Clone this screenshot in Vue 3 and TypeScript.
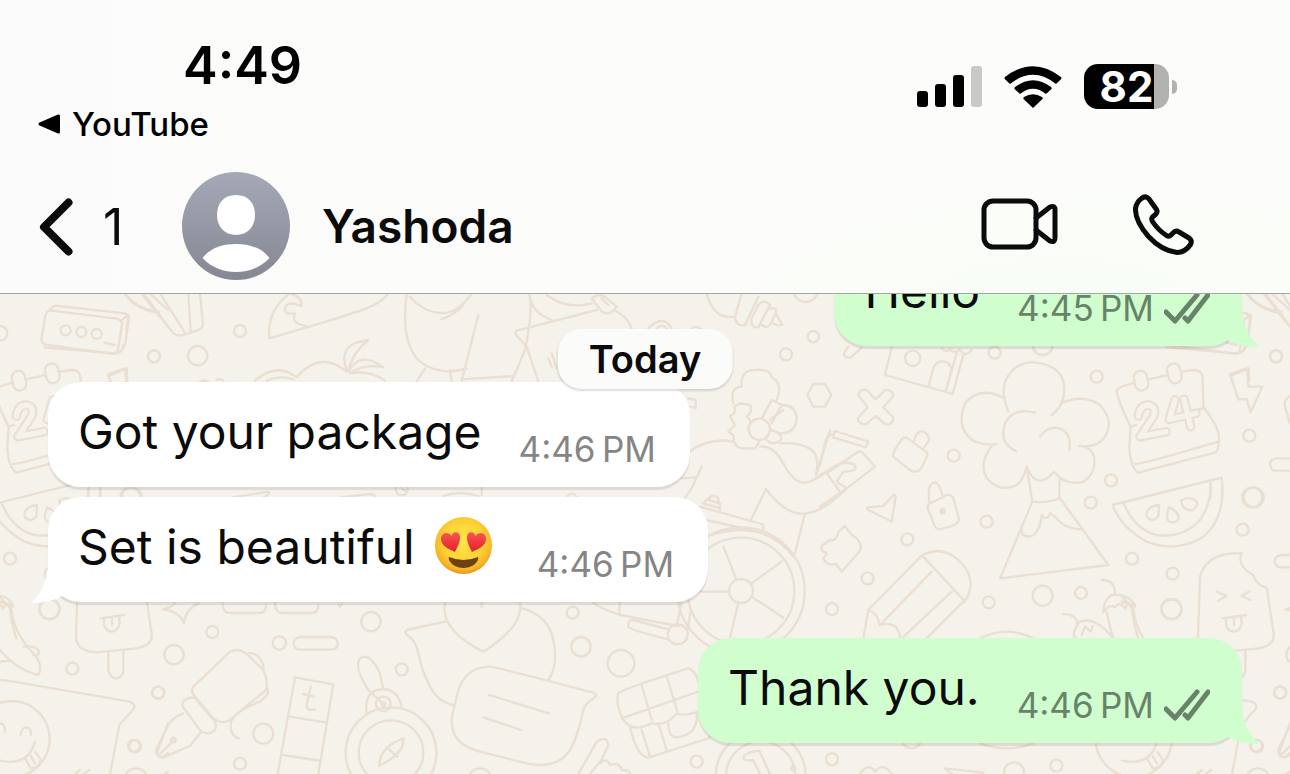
<script setup lang="ts">
interface Message {
  id: number
  text: string
  time: string
  outgoing: boolean
  tail: boolean
  emoji?: boolean
  newGroup?: boolean
}

const messages: Message[] = [
  { id: 1, text: 'Hello', time: '4:45\u202FPM', outgoing: true, tail: true },
  { id: 2, text: 'Got your package', time: '4:46\u202FPM', outgoing: false, tail: false, newGroup: true },
  { id: 3, text: 'Set is beautiful', time: '4:46\u202FPM', outgoing: false, tail: true, emoji: true },
  { id: 4, text: 'Thank you.', time: '4:46\u202FPM', outgoing: true, tail: true, newGroup: true },
]

interface DoodleGroup {
  x: number
  y: number
  dots: [number, number, number][]
  lines: string
}

// Wallpaper doodles, grouped by region; the whole set repeats every 3366 units.
const doodles: DoodleGroup[] = [
  {
    x: 0,
    y: -12,
    dots: [[197, 121, 15], [244, 126, 15], [290, 132, 15], [720, 123, 18], [462, 199, 18], [593, 197, 29], [0, 130, 22], [395, 622, 30], [1205, 598, 18]],
    lines:
      'M155 62L350 86Q368 90 366 104L354 178Q350 194 335 191L140 165Q122 162 125 145L136 78Q138 62 155 62Z' +
      'M140 68L160 50Q165 46 175 48L375 70Q388 74 386 88L376 160Q372 184 345 190M364 92L382 76' +
      'M375 10Q400 55 470 68M430 10L520 130Q535 142 560 132L595 120Q612 112 608 95L600 10M480 10L555 128M565 10L572 128' +
      'M870 10Q800 60 808 145Q1000 90 1100 55Q1150 35 1165 10M875 12Q905 20 905 48Q860 30 855 55Q850 75 885 70Q870 100 920 108' +
      'M765 272Q830 215 890 262Q960 180 1040 245M1040 240Q1010 160 1105 150Q1055 190 1045 245Q1080 180 1150 232Q1090 220 1050 250Q1110 240 1155 272' +
      'M800 272Q840 255 880 268M325 258L380 235L382 272M325 258L332 275' +
      'M600 275Q610 268 625 275M650 270Q660 264 670 272' +
      'M265 590V625M300 590V620M700 622L805 605Q812 612 790 622M1020 622L1110 612Q1125 612 1125 622',
  },
  {
    x: 1200,
    y: -12,
    dots: [[1217, 0, 36], [1240, 140, 17], [1158, 193, 18], [1078, 418, 32], [1023, 903, 191], [1023, 903, 160], [1023, 903, 36], [515, 625, 14]],
    lines:
      'M20 10Q0 160 60 215Q120 260 200 235M30 20Q80 75 140 68Q180 62 215 10M125 88Q170 70 190 45M235 75L185 272M75 235L50 275M150 240L155 275M185 268L340 258L335 275' +
      'M388 10Q400 60 375 180L335 275M390 25Q400 70 455 90M440 15Q500 60 575 40M590 60L350 122Q340 130 355 142L380 170L415 275M640 60Q680 75 695 115' +
      'M575 25Q600 5 620 25L650 50Q630 80 605 65ZM605 25L625 45M445 205L455 230M455 190L470 235' +
      'M745 115Q790 70 815 115M770 115Q785 100 800 115M875 115Q890 105 905 118' +
      'M920 10Q940 90 1005 80Q1005 108 1035 106L1075 20M1005 80L1025 10M1055 85Q1050 115 1075 112L1110 45Q1090 25 1075 45ZM1085 105Q1105 120 1115 95L1130 60Q1120 50 1108 58M1115 98Q1130 110 1147 104L1128 72' +
      'M1000 340Q990 290 1025 290Q1020 240 1065 240Q1110 235 1115 262Q1150 280 1130 330M1003 350L1020 340L1050 345Q1060 365 1040 380Q1060 395 1045 412M1003 350Q1010 370 990 378L1005 405L985 425L1000 435Q1000 475 1030 475L1065 475L1078 455' +
      'M1085 385L1115 330L1145 345L1115 400M1145 345Q1190 345 1190 390Q1185 430 1140 430L1112 420Q1150 430 1142 450Q1120 470 1100 450M1110 390L1150 360' +
      'M860 490Q930 440 1000 455M1080 470Q1120 465 1150 520Q1190 600 1240 570L1275 550M1140 460Q1200 455 1235 480Q1260 500 1248 555L1290 420M905 530L875 595L850 630M845 565L885 562' +
      'M1098 597L1050 695M1098 597Q1160 680 1220 670Q1270 665 1340 595M1215 670L1185 790' +
      'M900 650L1085 702Q1100 715 1080 727L920 690M908 640L960 655M913 638L920 628L960 640L960 658M925 628Q930 615 945 618Q958 622 955 638M915 740Q1090 680 1180 800' +
      'M1010 870L970 770M1052 882L1145 815M988 905H870M1055 920L1150 983M1015 938L990 1043' +
      'M1222 315L1240 282H1275L1294 315L1275 350H1240ZM865 325L887 330V355L870 350M5 595Q25 605 15 615M245 592V615M130 618Q180 600 235 618',
  },
  {
    x: 2460,
    y: -12,
    dots: [
      [278, 205, 23], [524, 188, 18], [668, 165, 30], [830, 260, 18], [1368, 199, 18], [1288, 437, 18], [401, 497, 18], [873, 571, 18], [812, 638, 18], [500, 695, 18],
      [262, 748, 18], [143, 865, 18], [36, 957, 18], [506, 937, 18], [668, 917, 30], [783, 909, 18], [1055, 958, 30], [1058, 851, 18], [936, 806, 18], [1268, 719, 18], [1297, 622, 30],
      [368, 663, 7], [368, 663, 3],
    ],
    lines:
      'M125 172L95 200Q80 208 72 195Q70 188 85 170' +
      'M215 172L195 255L398 312L430 195M378 300L410 190M325 290L340 235Q350 210 375 215Q400 225 392 250L378 300M365 175Q375 190 390 178Q405 195 420 178Q435 205 455 180' +
      'M115 315Q120 295 140 300L167 328L195 300Q215 297 220 318L190 352L220 382Q218 408 195 402L167 378L140 402Q115 405 113 385L143 352Z' +
      'M45 423L145 455L138 472L38 442ZM38 432Q20 435 15 460L0 525M20 550L110 488Q122 480 130 490L165 530L80 595L50 575M20 550L60 605M0 555L20 545Q70 505 105 525Q115 545 70 545L50 575M0 650L80 595' +
      'M260 443L322 488Q325 500 300 540Q285 550 270 540L220 500Q215 490 245 448Q252 440 260 443ZM283 450Q290 420 310 425Q330 435 325 455L308 478' +
      'M335 638L380 615Q395 612 400 625L417 685Q418 700 395 708L360 718Q347 718 343 705L323 655Q322 642 335 638ZM328 635Q320 580 345 577Q360 580 367 615' +
      'M142 652Q140 660 150 662L215 695L227 618Q224 612 218 618L190 648Z' +
      'M8 765L30 750Q50 755 55 725L75 708L95 735Q125 750 122 780L65 845L48 822Q20 830 10 805Q30 785 8 785Q0 775 8 765Z' +
      'M565 365Q540 300 560 265Q590 215 640 217Q740 225 732 310Q728 350 695 375M722 340Q790 310 840 345Q880 390 860 430Q840 475 778 468M552 325Q480 285 435 340Q405 420 465 455Q500 468 530 462M588 483Q535 460 555 400Q580 350 645 368M660 440Q690 400 730 420Q755 440 748 480' +
      'M515 468Q475 520 500 565Q540 610 590 585Q610 570 620 530Q650 605 702 545Q740 590 790 575Q830 550 822 500Q815 475 790 470' +
      'M620 530L637 635M718 570V625M637 635Q680 640 720 625M637 635L540 865L865 825L720 625M605 715Q600 740 630 740Q660 730 665 675Q680 695 690 670L705 680Q730 715 780 718' +
      'M945 278Q895 290 890 302Q892 330 932 410L928 470Q930 530 955 548L1185 488Q1200 480 1196 430Q1185 395 1150 350L1148 262Q1145 240 1120 240L1087 245M985 268L1043 255M945 522Q955 526 1195 455M932 410L948 405M1125 360L1150 355' +
      'M1230 252L1282 235L1285 290L1327 290L1292 367L1280 327L1255 328ZM1410 505H1370Q1350 508 1350 523Q1352 542 1370 542H1410M1410 795H1385Q1364 798 1364 813Q1366 832 1385 832H1410M1410 318Q1390 330 1395 350L1410 400' +
      'M878 645L1205 563Q1220 680 1150 740Q1070 790 980 755Q900 710 878 645ZM910 638Q945 720 1010 735Q1090 745 1140 690Q1175 640 1172 575' +
      'M1017 645Q975 650 980 680Q995 700 1015 680ZM1048 652Q1035 680 1045 692Q1065 705 1077 685Q1075 665 1048 652ZM1083 632Q1090 665 1120 660Q1140 640 1125 630Q1105 618 1083 632Z' +
      'M1340 893Q1308 885 1300 855Q1250 830 1265 790Q1160 785 1140 860L1134 1040Q1136 1085 1196 1087L1316 1075Q1366 1065 1361 1030ZM1231 1087V1140Q1236 1165 1256 1165Q1276 1160 1276 1140V1083' +
      'M1190 905L1220 918L1195 932M1290 903L1265 918L1292 930M1208 985L1278 975M1218 985V1005Q1225 1025 1243 1025Q1262 1020 1265 1000L1263 980M1242 985V1005' +
      'M305 797L145 960L130 1045M305 797Q370 760 425 820Q470 870 440 925L320 1045M310 800L435 935M335 845L180 1005M395 905L245 1045M145 960Q175 970 178 1005Q235 990 240 1045' +
      'M730 972Q765 970 775 1000Q750 1040 770 1045M770 1000Q820 970 880 1045M785 1035L795 1010L812 1025L818 1008M845 870Q885 870 885 910M850 965Q855 905 900 915Q930 920 945 945L925 940L915 955Q900 930 885 952Q870 940 850 965M860 965L870 1010L880 1045M935 950Q940 1000 955 1045M480 1045Q560 1005 640 1045' +
      'M1280 10Q1320 60 1385 65M1330 10L1410 110M1355 10L1410 60M1275 70L1292 75L1285 120M1040 172L1250 190Q1275 190 1275 165M1220 158L1250 165',
  },
  {
    x: 0,
    y: 888,
    dots: [
      [148, 57, 30], [637, 126, 18], [522, 194, 29], [217, 236, 18], [475, 308, 18], [405, 469, 18], [790, 431, 30], [720, 521, 18], [838, 159, 20], [1113, 95, 29], [1205, 238, 18], [408, 570, 35],
      [35, 447, 114], [520, 450, 7], [1173, 488, 97], [1173, 488, 136], [1150, 342, 22], [1150, 342, 5],
    ],
    lines:
      'M0 180Q50 240 115 255Q130 230 105 195Q40 130 35 60L0 20M0 35L40 50M70 170Q110 165 118 185Q115 200 100 195M0 215L30 212' +
      'M-30 272Q10 268 40 275L390 335Q410 345 400 358L358 405L330 552M0 400Q15 400 15 425M62 435Q65 412 80 412Q95 415 93 435M0 512Q85 530 105 455M75 505L92 535Q120 535 122 508L105 485M92 498L105 520M225 552L240 540M250 552L268 540' +
      'M490 58Q540 65 552 100Q555 60 595 40M490 58Q520 50 525 40M668 38Q668 68 688 69H780Q798 68 798 45M825 38Q825 68 845 69H937Q955 68 955 45M1015 45L1020 50L1025 42' +
      'M900 141H994Q1013 144 1013 160Q1013 178 994 179H900Q881 178 881 160Q881 144 900 141Z' +
      'M580 290L690 185Q715 172 740 192L790 240Q805 270 798 300L690 390Q665 405 640 385L585 320Q570 305 580 290ZM740 192Q770 180 790 225V240M800 290Q815 310 780 335Q700 365 692 400Q690 440 717 445' +
      'M550 335Q565 318 585 325L645 395Q655 425 625 430Q610 430 600 420L548 350Q546 340 550 335ZM550 370Q510 385 500 415L468 480Q470 505 490 502L570 468L603 425M480 492L520 452' +
      'M833 552L885 262L1000 283L955 552M868 380L978 397M850 495L962 513M932 290L920 345Q920 365 945 358M910 312L942 320' +
      'M1100 370Q1090 300 1150 297Q1195 300 1205 352M1105 300Q1060 230 1080 205Q1110 185 1140 250L1150 297M1105 300L1150 342M1210 445Q1215 490 1137 528Q1140 470 1210 445ZM1160 472L1192 500',
  },
  {
    x: 1200,
    y: 888,
    dots: [[518, 68, 18], [543, 170, 29], [663, 220, 40], [890, 515, 18], [240, 570, 35], [833, 133, 30], [1082, 558, 135], [1082, 558, 104], [1180, 535, 6]],
    lines:
      'M135 95L20 120Q12 128 22 135Q50 155 55 190Q65 240 85 280Q110 335 158 345M135 40Q120 120 250 185Q370 110 360 40M245 38V50M365 55Q430 70 455 130Q480 220 445 270' +
      'M270 230Q285 230 580 308Q595 314 585 322Q555 340 550 360Q530 450 510 480Q470 540 380 520L240 485Q140 460 158 370L175 300Q200 230 270 230ZM268 315L447 370M250 382L363 420' +
      'M655 310Q660 300 865 235Q885 240 895 275M655 310Q645 340 670 390Q700 430 755 400Q800 410 830 370Q850 380 895 365M725 285L755 390M800 258L832 365M665 385L895 305M690 410Q710 500 745 503L910 450Q925 448 930 440M725 420L750 500M775 400L800 480M805 400Q805 450 840 440Q895 430 890 370' +
      'M535 552L590 455Q620 435 625 465L600 520Q620 500 630 525Q660 515 665 540Q690 540 690 552M570 552L600 515' +
      'M580 38Q610 60 660 75L835 108M660 38L657 75M845 40L830 105M805 118L700 90Q682 90 685 110Q688 120 805 148M870 70L862 130' +
      'M1078 482Q1045 485 1030 500Q1030 515 1060 510L1080 552M1078 482L1110 552',
  },
  {
    x: 2460,
    y: 888,
    dots: [[36, 508, 18], [709, 527, 18], [582, 547, 30], [1380, 308, 18], [1308, 467, 18], [275, 445, 30]],
    lines: 'M120 552Q145 515 165 545Q190 515 215 552M395 552L375 535L490 548M480 460Q560 490 640 460M1410 400L1380 480Q1375 505 1395 500L1410 490M1400 552L1410 545',
  },
]
</script>

<template>
  <div class="screen">
    <header class="top">
      <div class="status">
        <div class="status-left">
          <time class="clock">4:49</time>
          <a class="return" href="#">
            <svg class="return-icon" viewBox="0 0 22 22" aria-hidden="true"><path d="M20 1.500Q22 1 22 3V19Q22 21 20 20.500L1.500 12.500Q-.5 11 1.500 9.500Z" /></svg>
            <span>YouTube</span>
          </a>
        </div>
        <div class="status-right">
          <svg class="signal" viewBox="0 0 65 41" aria-label="Signal" role="img">
            <rect x="0" y="25" width="11" height="16" rx="3" />
            <rect x="18" y="18" width="11" height="23" rx="3" />
            <rect x="36" y="9" width="11" height="32" rx="3" />
            <rect x="54" y="0" width="11" height="41" rx="3" fill="#c9c9c8" />
          </svg>
          <svg class="wifi" viewBox="0 0 58 42" aria-label="Wi-Fi" role="img">
            <path d="M29 42L19.500 33Q18.800 32 20 31Q29 25.500 38 31Q39.200 32 38.500 33Z" />
            <path d="M10.500 23L16 28Q29 17.500 42 28L47.500 23Q48 22 47 21Q29 7.500 11 21Q10 22 10.500 23Z" />
            <path d="M.8 13L6 18Q29 -.5 52 18L57.200 13Q57.800 12 57 11Q29-10.500 1 11Q.2 12 .8 13Z" />
          </svg>
          <div class="battery">
            <span class="battery-body">82</span>
            <span class="battery-cap"></span>
          </div>
        </div>
      </div>

      <nav class="nav">
        <button class="back" type="button" aria-label="Back">
          <svg class="chevron" viewBox="0 0 34 58" aria-hidden="true"><path d="M29.500 4.500L5 29L29.500 53.500" /></svg>
          <span>1</span>
        </button>
        <svg class="avatar" viewBox="0 0 108 108" aria-hidden="true">
          <defs>
            <linearGradient id="avatar-fill" x1="0" y1="0" x2="0" y2="1">
              <stop offset="0" stop-color="#a5a9b7" />
              <stop offset="1" stop-color="#858892" />
            </linearGradient>
          </defs>
          <circle cx="54" cy="54" r="54" fill="url(#avatar-fill)" />
          <path d="M54 23C67 23 73 32 73 43S66 63 54 63S35 54 35 43S41 23 54 23Z" fill="#fff" />
          <path d="M20.500 86C29 75 42 72 54 72S79 75 87.500 86C78 96 66 100 54 100S30 96 20.500 86Z" fill="#fff" />
        </svg>
        <h1 class="name">Yashoda</h1>
        <div class="actions">
          <button class="action" type="button" aria-label="Video call">
            <svg class="video" viewBox="0 0 78 52" aria-hidden="true">
              <rect x="3" y="3" width="52" height="46" rx="9" />
              <path d="M55 20L69 9Q74 7 74 12V40Q74 45 69 43L55 32" />
            </svg>
          </button>
          <button class="action" type="button" aria-label="Voice call">
            <svg class="phone" viewBox="0 0 61 61" aria-hidden="true">
              <path d="M8.500 4.500Q12.500 1 16 5L23.500 15.500Q25 18 22.500 20.500L19.500 23Q18 25 19.500 27.500Q25 36 33.500 41.500Q36 43 38 41L40.500 38.500Q43 36 46 38L56 44Q59.500 46.500 57.500 50.500Q52 58.500 44 58.500Q29 57 15.500 42.500Q2 27 2.500 14.500Q3.500 8 8.500 4.500Z" />
            </svg>
          </button>
        </div>
      </nav>
    </header>

    <main class="chat">
      <svg class="wallpaper" viewBox="0 0 3870 1440" preserveAspectRatio="xMinYMin slice" aria-hidden="true">
        <defs>
          <g id="doodle-tile">
            <g v-for="(group, i) in doodles" :key="i" :transform="`translate(${group.x} ${group.y})`">
              <path :d="group.lines" />
              <circle v-for="(dot, j) in group.dots" :key="j" :cx="dot[0]" :cy="dot[1]" :r="dot[2]" />
            </g>
            <g transform="translate(2460 -12)">
              <rect x="943" y="242" width="40" height="60" rx="20" transform="rotate(-12 963 272)" />
              <rect x="1043" y="220" width="40" height="60" rx="20" transform="rotate(-12 1063 250)" />
              <g class="digit-edge">
                <path d="M955 378Q960 345 985 345Q1012 350 1000 380L960 440L1038 425" />
                <path d="M1065 330L1048 388L1128 370M1092 328L1112 410" />
              </g>
              <g class="digit-core">
                <path d="M955 378Q960 345 985 345Q1012 350 1000 380L960 440L1038 425" />
                <path d="M1065 330L1048 388L1128 370M1092 328L1112 410" />
              </g>
            </g>
          </g>
        </defs>
        <use href="#doodle-tile" />
        <use href="#doodle-tile" x="-3366" />
        <use href="#doodle-tile" x="3366" />
      </svg>

      <div class="day">Today</div>

      <ol class="thread">
        <li
          v-for="message in messages"
          :key="message.id"
          class="bubble"
          :class="{ outgoing: message.outgoing, spaced: message.newGroup }"
        >
          <svg v-if="message.tail" class="tail" viewBox="0 0 42 44" aria-hidden="true">
            <path d="M17 0Q18 26 0 43Q20 43 31 36L42 18Z" />
          </svg>
          <span class="text">{{ message.text }}</span>
          <svg v-if="message.emoji" class="emoji" viewBox="0 0 57 57" role="img" aria-label="Smiling face with heart eyes">
            <defs>
              <radialGradient id="face-fill" cx=".5" cy=".42" r=".58">
                <stop offset="0" stop-color="#ffe64a" />
                <stop offset=".6" stop-color="#fdd336" />
                <stop offset=".88" stop-color="#f8b426" />
                <stop offset="1" stop-color="#e8921c" />
              </radialGradient>
              <linearGradient id="heart-fill" x1="0" y1="0" x2="0" y2="1">
                <stop offset="0" stop-color="#fb5550" />
                <stop offset="1" stop-color="#e01f2f" />
              </linearGradient>
            </defs>
            <circle cx="28.500" cy="28.500" r="28.500" fill="url(#face-fill)" />
            <path d="M14 40Q28.500 46 43 40Q44 41 42.500 44Q38 51 28.500 51T14.500 44Q13 41 14 40Z" fill="#6b4210" />
            <path d="M20 35C14 32 6 29 6 22C6 15.500 13.500 14 16.500 19C17.500 14 24.500 13.500 25 19.500C25.300 25 22.500 30 20 35Z" fill="url(#heart-fill)" />
            <path d="M37 35C43 32 51 29 51 22C51 15.500 43.500 14 40.500 19C39.500 14 32.500 13.500 32 19.500C31.700 25 34.500 30 37 35Z" fill="url(#heart-fill)" />
          </svg>
          <time class="time">{{ message.time }}</time>
          <svg v-if="message.outgoing" class="ticks" viewBox="0 0 46 32" aria-label="Delivered" role="img">
            <path d="M2 20L11 29L33 3M21 26L24 29L44 3" />
          </svg>
        </li>
      </ol>
    </main>
  </div>
</template>

<style>
body {
  margin: 0;
}
</style>

<style scoped>
.screen {
  display: flex;
  flex-direction: column;
  height: 100vh;
  overflow: hidden;
  font-family: Inter, "Liberation Sans", sans-serif;
  color: #0a0b0a;
}

.top {
  flex: none;
  display: flex;
  flex-direction: column;
  padding: 34px 96px 13px 38px;
  background:
    radial-gradient(ellipse 420px 120px at 82% 100%, #f8fdf6, transparent),
    linear-gradient(to right, #fbfbfb, #fcfcfa 45%, #fcfdfa);
  border-bottom: 1px solid #a5a5a3;
}

.status {
  display: flex;
  justify-content: space-between;
  align-items: flex-start;
  height: 138px;
  color: #000;
}

.status-left {
  display: flex;
  flex-direction: column;
  gap: 4px;
}

.clock {
  padding-left: 145px;
  font-size: 52px;
  font-weight: 600;
  line-height: 64px;
}

.return {
  display: flex;
  align-items: center;
  gap: 12px;
  font-size: 33px;
  font-weight: 500;
  line-height: 44px;
  color: inherit;
  text-decoration: none;
}

.return-icon {
  width: 22px;
  height: 22px;
}

.status-right {
  display: flex;
  align-items: center;
  gap: 22px;
  padding: 30px 17px 0 0;
}

.signal {
  width: 65px;
  height: 41px;
}

.wifi {
  width: 58px;
  height: 42px;
}

.battery {
  display: flex;
  align-items: center;
  gap: 3px;
}

.battery-body {
  width: 85px;
  height: 45px;
  border-radius: 14px;
  background: linear-gradient(to right, #000 70px, #b1b1b0 70px);
  color: #fff;
  font-size: 42px;
  font-weight: 700;
  line-height: 45px;
  text-align: center;
}

.battery-cap {
  width: 5px;
  height: 14px;
  border-radius: 0 5px 5px 0;
  background: #b1b1b0;
}

.nav {
  display: flex;
  align-items: center;
  height: 108px;
}

button {
  padding: 0;
  border: 0;
  background: none;
  font: inherit;
  color: inherit;
}

.back {
  display: flex;
  align-items: center;
  gap: 30px;
  width: 144px;
  padding: 2px 0 0 1px;
  font-size: 50px;
  line-height: 60px;
}

.chevron {
  width: 34px;
  height: 58px;
}

.chevron path {
  fill: none;
  stroke: #0a0b0a;
  stroke-width: 8;
  stroke-linecap: round;
  stroke-linejoin: round;
}

.avatar {
  width: 108px;
  height: 108px;
}

.name {
  flex: 1;
  margin: 0 0 0 32px;
  font-size: 46px;
  font-weight: 600;
  line-height: 60px;
}

.actions {
  display: flex;
  align-items: center;
  gap: 74px;
  padding-bottom: 4px;
}

.action {
  display: flex;
}

.video {
  width: 78px;
  height: 52px;
}

.phone {
  width: 61px;
  height: 61px;
}

.video,
.phone {
  fill: none;
  stroke: #0a0b0a;
  stroke-width: 5;
  stroke-linecap: round;
  stroke-linejoin: round;
}

.chat {
  position: relative;
  flex: 1;
  min-height: 0;
  display: flex;
  flex-direction: column;
  justify-content: flex-end;
  overflow: hidden;
  background: #f5f1eb;
}

.wallpaper {
  position: absolute;
  inset: 0;
  width: 100%;
  height: 100%;
  fill: none;
  stroke: #e9dfd2;
  stroke-width: 7;
  stroke-linecap: round;
  stroke-linejoin: round;
}

.digit-edge {
  stroke-width: 29;
}

.digit-core {
  stroke: #f5f1eb;
  stroke-width: 16;
}

.day {
  position: absolute;
  z-index: 2;
  top: 35px;
  left: 50%;
  transform: translateX(-50%);
  padding: 0 31px;
  border-radius: 24px;
  background: #fbfbfa;
  box-shadow: 0 2px 2px rgba(60, 50, 40, 0.16);
  font-size: 38px;
  font-weight: 600;
  line-height: 60px;
}

.thread {
  position: relative;
  display: flex;
  flex-direction: column;
  align-items: flex-start;
  gap: 10px;
  margin: 0;
  padding: 0 48px 31px;
  list-style: none;
}

.bubble {
  position: relative;
  display: flex;
  box-sizing: border-box;
  height: 105px;
  padding: 20px 34px 16px 30px;
  border-radius: 33px;
  background: #fff;
  box-shadow: 0 3px 1px rgba(70, 60, 50, 0.13);
  --time: #858585;
}

.outgoing {
  align-self: flex-end;
  padding-right: 32px;
  background: #d0fecf;
  --time: #688369;
}

.spaced {
  margin-top: 26px;
}

.tail {
  position: absolute;
  left: -17px;
  bottom: -2px;
  width: 42px;
  height: 44px;
  fill: #fff;
}

.outgoing .tail {
  left: auto;
  right: -17px;
  transform: scaleX(-1);
  fill: #d0fecf;
}

.text {
  position: relative;
  font-size: 48px;
  line-height: 60px;
  white-space: nowrap;
}

.emoji {
  width: 57px;
  height: 57px;
  margin: 0 8px 0 20px;
}

.time {
  align-self: flex-end;
  margin-left: 37px;
  color: var(--time);
  font-size: 35px;
  line-height: 44px;
  white-space: nowrap;
}

.ticks {
  align-self: flex-end;
  width: 46px;
  height: 32px;
  margin: 0 0 6px 10px;
  fill: none;
  stroke: var(--time);
  stroke-width: 5;
  stroke-linecap: round;
  stroke-linejoin: round;
}
</style>
